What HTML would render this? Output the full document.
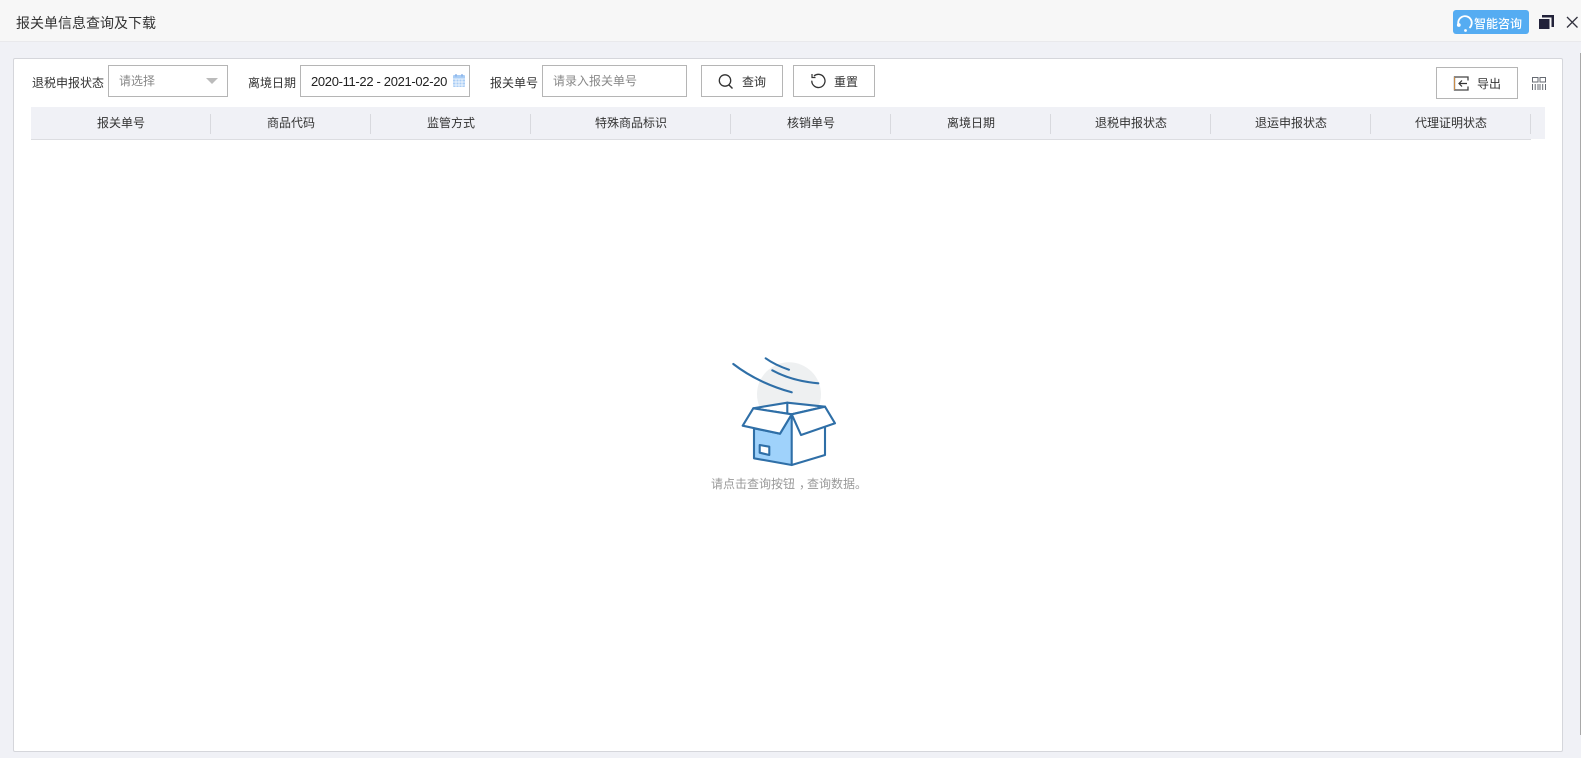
<!DOCTYPE html>
<html lang="zh-CN"><head><meta charset="utf-8"><title>报关单信息查询及下载</title>
<style>
html,body{margin:0;padding:0}
body{width:1581px;height:758px;overflow:hidden;position:relative;background:#f0f1f6;font-family:"Liberation Sans","Noto Sans CJK SC",sans-serif;font-size:12px;color:#333}
.a{position:absolute;white-space:nowrap}
.t{line-height:18px}
.box{position:absolute;box-sizing:border-box;background:#fff;border:1px solid #b5b5b5}
.sep{position:absolute;top:114px;width:1px;height:20px;background:#d8d9de}
.th{position:absolute;top:108px;height:32px;line-height:30px;text-align:center;color:#333}
svg{position:absolute;left:0;top:0;overflow:visible}
</style></head><body>
<div class="a" style="left:0;top:0;width:1581px;height:41px;background:#f7f7f7;border-bottom:1px solid #e9e9ec"></div>
<div class="a" style="left:16px;top:13px;font-size:14px;line-height:20px;color:#333">报关单信息查询及下载</div>
<div class="a" style="left:1453px;top:10px;width:76px;height:24px;background:#55acf2;border-radius:3px"></div>
<div class="a t" style="left:1474px;top:15px;color:#fff;font-weight:500">智能咨询</div>
<div class="a" style="left:1580px;top:53px;width:1px;height:682px;background:#a8a8a8"></div>
<div class="a" style="left:13px;top:58px;width:1550px;height:694px;box-sizing:border-box;background:#fff;border:1px solid #d5d6db;border-radius:2px"></div>

<div class="a t" style="left:32px;top:74px">退税申报状态</div>
<div class="box" style="left:108px;top:65px;width:120px;height:32px"></div>
<div class="a t" style="left:119px;top:72px;color:#888">请选择</div>
<div class="a t" style="left:248px;top:74px">离境日期</div>
<div class="box" style="left:300px;top:65px;width:170px;height:32px"></div>
<div class="a" style="left:311px;top:73px;font-size:13px;line-height:18px;color:#222;letter-spacing:-.33px">2020-11-22 - 2021-02-20</div>
<div class="a t" style="left:490px;top:74px">报关单号</div>
<div class="box" style="left:542px;top:65px;width:145px;height:32px"></div>
<div class="a t" style="left:553px;top:72px;color:#888">请录入报关单号</div>
<div class="box" style="left:701px;top:65px;width:82px;height:32px"></div>
<div class="a t" style="left:742px;top:73px">查询</div>
<div class="box" style="left:793px;top:65px;width:82px;height:32px"></div>
<div class="a t" style="left:834px;top:73px">重置</div>
<div class="box" style="left:1436px;top:67px;width:82px;height:32px"></div>
<div class="a t" style="left:1477px;top:75px">导出</div>

<div class="a" style="left:31px;top:107px;width:1514px;height:32px;background:#f0f1f6"></div>
<div class="a" style="left:31px;top:139px;width:1500px;height:1px;background:#dcdde1"></div>
<div class="th" style="left:31px;width:180px">报关单号</div>
<div class="th" style="left:211px;width:160px">商品代码</div>
<div class="th" style="left:371px;width:160px">监管方式</div>
<div class="th" style="left:531px;width:200px">特殊商品标识</div>
<div class="th" style="left:731px;width:160px">核销单号</div>
<div class="th" style="left:891px;width:160px">离境日期</div>
<div class="th" style="left:1051px;width:160px">退税申报状态</div>
<div class="th" style="left:1211px;width:160px">退运申报状态</div>
<div class="th" style="left:1371px;width:160px">代理证明状态</div>
<div class="sep" style="left:210px"></div><div class="sep" style="left:370px"></div><div class="sep" style="left:530px"></div><div class="sep" style="left:730px"></div><div class="sep" style="left:890px"></div><div class="sep" style="left:1050px"></div><div class="sep" style="left:1210px"></div><div class="sep" style="left:1370px"></div><div class="sep" style="left:1530px"></div>

<svg width="1581" height="758" viewBox="0 0 1581 758" fill="none">
<!-- headset -->
<path d="M1458.500 25A6.800 6.800 0 1 1 1469.500 28" stroke="#fff" stroke-width="1.800"/>
<circle cx="1458.800" cy="25" r="1.900" fill="#fff"/><circle cx="1465.500" cy="30.500" r="1.400" fill="#fff"/>
<!-- restore -->
<path d="M1542 15h12v12h-2.500v-9.500H1542z" fill="#22223a"/>
<rect x="1539" y="19" width="10.500" height="10" fill="#22223a"/>
<!-- close -->
<path d="M1567 17l10.500 10.500M1577.500 17L1567 27.500" stroke="#33333f" stroke-width="1.300"/>
<!-- select arrow -->
<path d="M206 78h12l-6 6z" fill="#bbb"/>
<!-- calendar -->
<rect x="453" y="75" width="12" height="12" rx="1" fill="#a9cdf5"/>
<path d="M453 79h12M453 82h12M453 85h12M456 79v8M459 79v8M462 79v8" stroke="#fff" stroke-width=".7"/>
<path d="M456 74v2.500M462 74v2.500" stroke="#7fa9e6" stroke-width="1.200"/>
<!-- search -->
<circle cx="725" cy="80.500" r="5.700" stroke="#333" stroke-width="1.300"/><path d="M729 85l3.500 3.500" stroke="#333" stroke-width="1.400"/>
<!-- reset -->
<path d="M814 76a6.600 6.600 0 1 1-2.200 4.700" stroke="#333" stroke-width="1.300"/><path d="M812 74v3.500h3.500" stroke="#333" stroke-width="1.200"/>
<!-- export -->
<path d="M1468 80.500v-3.500h-13.500v13H1468v-3.500" stroke="#444" stroke-width="1.300"/><path d="M1467 83.500h-8M1462 80.500l-3 3 3 3" stroke="#333" stroke-width="1.200"/>
<path d="M1454.500 77v13" stroke="#c98a45" stroke-width="1"/>
<!-- grid -->
<path d="M1532.500 77.500h5.500v4.500h-5.500zM1540 77.500h5.500v4.500h-5.500zM1532.500 84v6M1535.200 84v6M1538 84v6M1540 84v6M1542.700 84v6M1545.500 84v6" stroke="#666a72" stroke-width="1"/>
<!-- empty box -->
<circle cx="789" cy="394.300" r="32" fill="#eef0f1"/>
<g stroke="#2f6fa7" stroke-width="2.100" stroke-linejoin="round" stroke-linecap="round">
<path d="M733.300 364Q758 383 791.700 392.300M765.700 358.300Q775 365 789 369.700M772.300 370.300Q791.700 381 818.300 383.300"/>
<path d="M753.300 408.300L787.300 402.700L825 406.700L791.700 414.300Z" fill="#fff"/>
<path d="M787.300 402.700V412.300"/>
<path d="M754 428.300V420H825V455L791.700 465V414.300Z" fill="#fff" stroke="none"/>
<path d="M754 428.300V458.300L791.700 465V414.300L780 433.700Z" fill="#9fd2fb"/>
<path d="M791.700 465L825 455V427.700"/>
<path d="M759.700 445L769.300 446.700V455L759.700 452.700Z" fill="#fff"/>
<path d="M753.300 408.300L742.700 425.700L780 433.700L791.700 414.300Z" fill="#fff"/>
<path d="M825 406.700L835 423.300L801 435L791.700 414.300Z" fill="#fff"/>
</g>
</svg>
<div class="a t" style="left:711px;top:475px;color:#999">请点击查询按钮<span style="position:relative;left:4px">，</span>查询数据。</div>
</body></html>
